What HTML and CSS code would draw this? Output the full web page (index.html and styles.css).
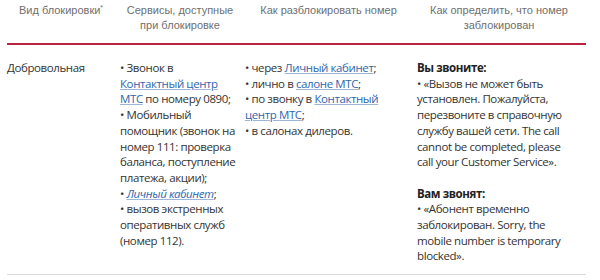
FILE: index.html
```html
<!DOCTYPE html>
<html lang="ru">
<head>
<meta charset="utf-8">
<link rel="stylesheet" href="styles.css">
</head>
<body>
<div class="table">
  <div class="head">
    <div class="th c1">Вид блокировки<sup>*</sup></div>
    <div class="th c2">Сервисы, доступные при блокировке</div>
    <div class="th c3">Как разблокировать номер</div>
    <div class="th c4">Как определить, что номер заблокирован</div>
  </div>
  <div class="row">
    <div class="td c1">Добровольная</div>
    <div class="td c2">• Звонок в<br><a href="#">Контактный центр<br>МТС</a> по номеру 0890;<br>• Мобильный<br>помощник (звонок на<br>номер 111: проверка<br>баланса, поступление<br>платежа, акции);<br>• <a href="#" class="it">Личный кабинет</a>;<br>• вызов экстренных<br>оперативных служб<br>(номер 112).</div>
    <div class="td c3">• через <a href="#">Личный кабинет</a>;<br>• лично в <a href="#">салоне МТС</a>;<br>• по звонку в <a href="#">Контактный центр МТС</a>;<br>• в салонах дилеров.</div>
    <div class="td c4">
      <p><b>Вы звоните:</b><br>• «Вызов не может быть<br>установлен. Пожалуйста,<br>перезвоните в справочную<br>службу вашей сети. The call<br>cannot be completed, please<br>call your Customer Service».</p>
      <p><b>Вам звонят:</b><br>• «Абонент временно<br>заблокирован. Sorry, the<br>mobile number is temporary<br>blocked».</p>
    </div>
  </div>
</div>
</body>
</html>
```
FILE: styles.css
```css
html, body { margin: 0; padding: 0; background: #fff; }
.table { margin-left: 7px; width: 579px; }
.head, .row { display: grid; grid-template-columns: 113px 125px 172px 169px; }
.head { border-bottom: 2px solid #b8233d; padding: 3px 0 10px; }
.th { font-family: "Liberation Sans", Arial, sans-serif; font-size: 11px; line-height: 15px; color: #6f6f6f; text-align: center; padding-right: 5px; }
.th sup { font-size: 7px; vertical-align: 4px; line-height: 0; }
.row { border-bottom: 1px solid #dcdcdc; padding: 15px 0 10px; font-family: "Open Sans", sans-serif; font-size: 11.5px; letter-spacing: -0.4px; line-height: 15.7px; color: #333; }
.td { white-space: nowrap; }
.td.c1 { padding-right: 5px; }
.td.c3 { padding-right: 15px; white-space: normal; }
.td p { margin: 0 0 15.7px; }
.td p:last-child { margin-bottom: 0; }
.td b { color: #222; }
a { color: #2f66ad; text-decoration: underline; text-decoration-color: #9db6d8; text-underline-offset: 1px; }
a.it { font-style: italic; }
```
